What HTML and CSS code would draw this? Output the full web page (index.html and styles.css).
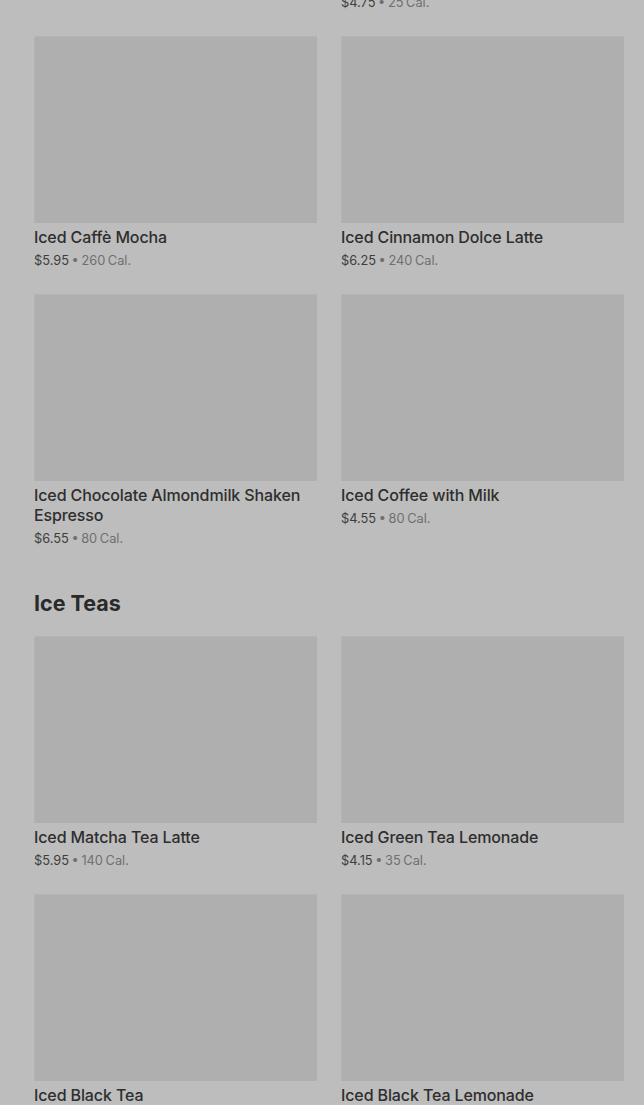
FILE: index.html
```html
<!DOCTYPE html>
<html lang="en">
<head>
<meta charset="utf-8">
<title>Menu</title>
<link rel="stylesheet" href="styles.css">
</head>
<body>
<main class="page">
  <section class="section first">
    <div class="grid">
      <article class="card">
        <div class="thumb"></div>
        <h3 class="name">Iced Caramel Macchiato</h3>
        <p class="meta"><span class="price">$5.75</span> <span class="dot">•</span> <span class="cal">250 Cal.</span></p>
      </article>
      <article class="card">
        <div class="thumb"></div>
        <h3 class="name">Iced Shaken Espresso with Classic Syrup</h3>
        <p class="meta"><span class="price">$4.75</span> <span class="dot">•</span> <span class="cal">25 Cal.</span></p>
      </article>
      <article class="card">
        <div class="thumb"></div>
        <h3 class="name">Iced Caffè Mocha</h3>
        <p class="meta"><span class="price">$5.95</span> <span class="dot">•</span> <span class="cal">260 Cal.</span></p>
      </article>
      <article class="card">
        <div class="thumb"></div>
        <h3 class="name">Iced Cinnamon Dolce Latte</h3>
        <p class="meta"><span class="price">$6.25</span> <span class="dot">•</span> <span class="cal">240 Cal.</span></p>
      </article>
      <article class="card">
        <div class="thumb"></div>
        <h3 class="name">Iced Chocolate Almondmilk Shaken Espresso</h3>
        <p class="meta"><span class="price">$6.55</span> <span class="dot">•</span> <span class="cal">80 Cal.</span></p>
      </article>
      <article class="card">
        <div class="thumb"></div>
        <h3 class="name">Iced Coffee with Milk</h3>
        <p class="meta"><span class="price">$4.55</span> <span class="dot">•</span> <span class="cal">80 Cal.</span></p>
      </article>
    </div>
  </section>
  <section class="section">
    <h2 class="section-title">Ice Teas</h2>
    <div class="grid">
      <article class="card">
        <div class="thumb"></div>
        <h3 class="name">Iced Matcha Tea Latte</h3>
        <p class="meta"><span class="price">$5.95</span> <span class="dot">•</span> <span class="cal">140 Cal.</span></p>
      </article>
      <article class="card">
        <div class="thumb"></div>
        <h3 class="name">Iced Green Tea Lemonade</h3>
        <p class="meta"><span class="price">$4.15</span> <span class="dot">•</span> <span class="cal">35 Cal.</span></p>
      </article>
      <article class="card">
        <div class="thumb"></div>
        <h3 class="name">Iced Black Tea</h3>
        <p class="meta"><span class="price">$3.95</span> <span class="dot">•</span> <span class="cal">0 Cal.</span></p>
      </article>
      <article class="card">
        <div class="thumb"></div>
        <h3 class="name">Iced Black Tea Lemonade</h3>
        <p class="meta"><span class="price">$4.15</span> <span class="dot">•</span> <span class="cal">35 Cal.</span></p>
      </article>
    </div>
  </section>
</main>
</body>
</html>
```
FILE: styles.css
```css
html, body {
  margin: 0;
  padding: 0;
  background: #bdbdbd;
  overflow: hidden;
}
body {
  font-family: Inter, "Noto Sans", "Liberation Sans", sans-serif;
  color: #2c2c2c;
}
.page {
  padding: 0 20px 0 34px;
}
.section.first {
  margin-top: -242px;
}
.grid {
  display: grid;
  grid-template-columns: 283px 283px;
  column-gap: 24px;
  row-gap: 24px;
}
.card {
  display: flex;
  flex-direction: column;
}
.thumb {
  height: 187px;
  background: #afafaf;
  box-shadow: inset 0 1px 0 #b4b4b4, inset 1px 0 0 #b3b3b3;
}
.name {
  margin: 4px 0 0;
  font-size: 16px;
  line-height: 20px;
  font-weight: 500;
  letter-spacing: -0.12px;
  color: #2e2e2e;
}
.meta {
  margin: 4px 0 0;
  font-size: 12.8px;
  line-height: 19px;
  word-spacing: -1px;
  color: #3d3d3d;
}
.dot, .cal {
  color: #6f6f6f;
}
.section-title {
  margin: 41px 0 19px;
  font-size: 21.5px;
  line-height: 28px;
  font-weight: 700;
  color: #2a2a2a;
}
```
